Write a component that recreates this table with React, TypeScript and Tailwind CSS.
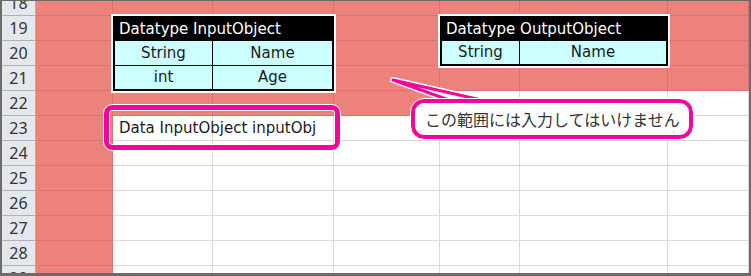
import React from 'react';

const ROWS = [18, 19, 20, 21, 22, 23, 24, 25, 26, 27, 28, 29];
const COLS = ['A', 'B', 'C', 'D', 'E', 'F', 'G'];

// shaded block: rows 18-21 across the sheet, row 22 up to D, column A all the way down
const isLocked = (row: number, col: number) => row <= 21 || (row === 22 && col <= 3) || col === 0;

interface TypeTableProps {
  title: string;
  rows: [string, string][];
  typeWidth: string;
}

const TypeTable: React.FC<TypeTableProps> = ({ title, rows, typeWidth }) => (
  <div className="flex h-full flex-col border-2 border-black outline-2 outline-white">
    <div className="flex h-[22px] shrink-0 items-center bg-black pl-1 text-white">{title}</div>
    {rows.map(([type, name], i) => (
      <div
        key={name}
        className={`flex border-t border-black bg-[#ccffff] text-[#1a1a1a] ${i === rows.length - 1 ? 'flex-1' : 'h-[25px]'}`}
      >
        <div className={`flex items-center justify-center ${typeWidth}`}>{type}</div>
        <div className="flex flex-1 items-center justify-center border-l border-black">{name}</div>
      </div>
    ))}
  </div>
);

export default function App() {
  return (
    <div className="relative h-[276px] w-[751px] overflow-hidden border-t border-b-[3px] border-l-2 border-r-2 border-[#6b6b6b] bg-white font-['DejaVu_Sans',sans-serif] text-[15px]">
      <div className="-mt-[10px] grid">
        {/* cell grid */}
        <div className="col-start-1 row-start-1 grid auto-rows-[25px] grid-cols-[34px_77px_100px_121px_106px_80px_148px_81px]">
          {ROWS.map((row) => (
            <React.Fragment key={row}>
              <div className="flex items-center justify-center border-r border-b border-[#aeb1b6] bg-[#e4e7ec] font-['Noto_Sans',sans-serif] text-[16px] text-[#333]">
                {row}
              </div>
              {COLS.map((c, i) => (
                <div
                  key={c}
                  className={
                    isLocked(row, i)
                      ? 'border-r border-b border-[#da746f] bg-[#ed817c]'
                      : 'border-r border-b border-[#dadada] bg-white'
                  }
                />
              ))}
            </React.Fragment>
          ))}
        </div>

        {/* cell contents */}
        <div className="col-start-1 row-start-1 grid auto-rows-[25px] grid-cols-[34px_77px_100px_121px_106px_80px_148px_81px]">
          <div className="col-span-2 col-start-3 row-span-3 row-start-2">
            <TypeTable
              title="Datatype InputObject"
              typeWidth="w-[97px]"
              rows={[
                ['String', 'Name'],
                ['int', 'Age'],
              ]}
            />
          </div>
          <div className="col-span-2 col-start-6 row-span-2 row-start-2">
            <TypeTable title="Datatype OutputObject" typeWidth="w-[77px]" rows={[['String', 'Name']]} />
          </div>
          <div className="col-start-3 row-start-6 flex items-center whitespace-nowrap pl-[6px] text-[#1a1a1a]">
            Data InputObject inputObj
          </div>
        </div>
      </div>

      {/* highlight around B23 */}
      <div className="absolute left-[102px] top-[104px] h-[45px] w-[236px] rounded-[8px] border-[5px] border-[#f5069a] shadow-[inset_0_0_0_1px_white] outline-1 outline-white" />

      {/* balloon tail */}
      <svg className="absolute left-0 top-0" width="747" height="272" viewBox="0 0 747 272">
        <polygon points="391,79 488,101 458,103" fill="white" stroke="white" strokeWidth="6" strokeLinejoin="round" />
        <polygon points="391,79 488,101 458,103" fill="white" stroke="#f5069a" strokeWidth="3" strokeLinejoin="round" />
      </svg>

      {/* balloon */}
      <div className="absolute left-[409px] top-[98px] flex h-[40px] w-[282px] items-center rounded-[13px] border-4 border-[#f5069a] bg-white pl-[10px] font-['Noto_Sans_CJK_JP',sans-serif] text-[16px] text-[#333] outline-1 outline-white">
        この範囲には入力してはいけません
      </div>
    </div>
  );
}
